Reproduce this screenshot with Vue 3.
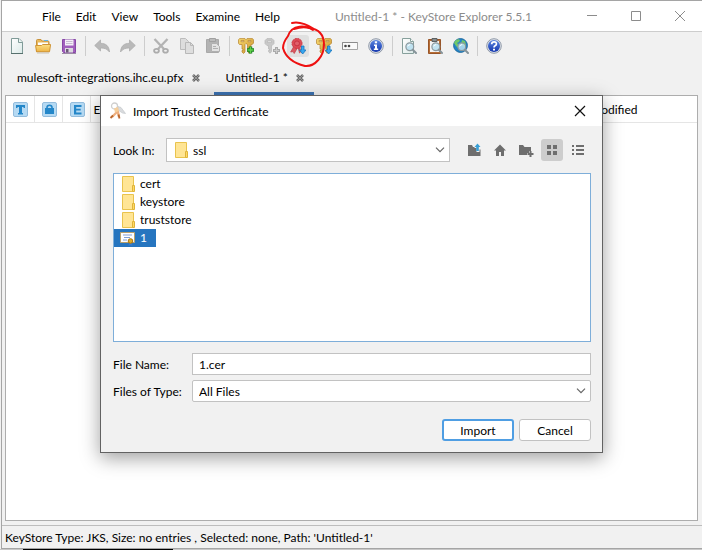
<script setup>
import { ref } from 'vue'

const menus = ['File', 'Edit', 'View', 'Tools', 'Examine', 'Help']
const toolGroups = [
  [{ id: 'new', label: 'New' }, { id: 'open', label: 'Open' }, { id: 'save', label: 'Save' }],
  [{ id: 'undo', label: 'Undo' }, { id: 'redo', label: 'Redo' }],
  [{ id: 'cut', label: 'Cut' }, { id: 'copy', label: 'Copy' }, { id: 'paste', label: 'Paste' }],
  [
    { id: 'genpair', label: 'Generate Key Pair' },
    { id: 'gensecret', label: 'Generate Secret Key' },
    { id: 'importcert', label: 'Import Trusted Certificate' },
    { id: 'importpair', label: 'Import Key Pair' },
    { id: 'password', label: 'Set Password' },
    { id: 'info', label: 'Properties' }
  ],
  [{ id: 'examfile', label: 'Examine File' }, { id: 'examclip', label: 'Examine Clipboard' }, { id: 'examssl', label: 'Examine SSL' }],
  [{ id: 'help', label: 'Help' }]
]
const tabs = [
  { name: 'mulesoft-integrations.ihc.eu.pfx', active: false },
  { name: 'Untitled-1 *', active: true }
]
const files = [
  { name: 'cert', folder: true },
  { name: 'keystore', folder: true },
  { name: 'truststore', folder: true },
  { name: '1', folder: false }
]
const selected = ref('1')
const fileName = ref('1.cer')
</script>

<template>
  <div class="screen">
    <main class="window">
      <header class="titlebar">
        <nav class="menus">
          <button v-for="m in menus" :key="m" type="button">{{ m }}</button>
        </nav>
        <h1>Untitled-1 * - KeyStore Explorer 5.5.1</h1>
        <div class="controls">
          <button type="button" aria-label="Minimize"><svg width="12" height="12" viewBox="0 0 12 12"><path d="M1 5.5h10" /></svg></button>
          <button type="button" aria-label="Maximize"><svg width="12" height="12" viewBox="0 0 12 12"><path d="M1.5 1.5h9v9h-9z" /></svg></button>
          <button type="button" aria-label="Close"><svg width="12" height="12" viewBox="0 0 12 12"><path d="M1 1l10 10M11 1L1 11" /></svg></button>
        </div>
      </header>

      <svg class="defs" width="0" height="0" aria-hidden="true">
        <defs>
          <linearGradient id="page" x1="0" y1="0" x2="1" y2="1"><stop offset="0" stop-color="#fff" /><stop offset="1" stop-color="#dceae8" /></linearGradient>
          <linearGradient id="gold" x1="0" y1="0" x2="1" y2="1"><stop offset="0" stop-color="#f8da72" /><stop offset="1" stop-color="#c9902a" /></linearGradient>
          <linearGradient id="blue" x1="0" y1="0" x2="0" y2="1"><stop offset="0" stop-color="#5b86e0" /><stop offset="1" stop-color="#1437ae" /></linearGradient>
          <linearGradient id="folder" x1="0" y1="0" x2="0" y2="1"><stop offset="0" stop-color="#fbdf84" /><stop offset="1" stop-color="#eeb445" /></linearGradient>
          <g id="lens"><circle cx="8.8" cy="8.8" r="3.9" fill="#b7dff0" fill-opacity=".85" stroke="#8b989d" stroke-width="1.2" /><path d="M6.7 8.4q.6-1.9 2.5-1.8" fill="none" stroke="#fff" /><path d="M11.8 11.8l3.2 3.2" stroke="#87949a" stroke-width="2" stroke-linecap="round" /></g>
          <g id="down"><path d="M11.5 8h2.500v4h2L12.700 16 9.500 12h2z" fill="#37a7f0" stroke="#1774bd" stroke-width=".8" /></g>
          <g id="keys"><path fill-rule="evenodd" d="M1.500.600h5.500l1 1 1-1h5.500l1 1.200v3.500L14 6.500h-1V15h-2.500v-1.500h-1V12h1v-1.500h-1V6.500L8 5.500 7 6.500V14L5.500 15.500 4 14v-1.500h1V11H4V6.500H1.500L.5 5.300V1.800zM3 2.500v1.200h3V2.500zM10 2.500v1.200h3V2.500z" fill="url(#gold)" stroke="#b5832b" stroke-width=".7" /></g>
        </defs>
      </svg>

      <div class="toolbar" role="toolbar" aria-label="Main">
        <template v-for="(group, gi) in toolGroups" :key="gi">
          <span v-if="gi" class="sep"></span>
          <button v-for="t in group" :key="t.id" type="button" :aria-label="t.label" :class="{ hot: t.id === 'importcert' }">
            <svg width="16" height="16" viewBox="0 0 16 16">
              <template v-if="t.id === 'new'">
                <path d="M2.500.500h7.500l3.500 3.500v11.500h-11z" fill="url(#page)" stroke="#809b98" /><path d="M9.500.500v4h4" fill="#edf6f4" stroke="#809b98" /><path d="M2 15.500h12" stroke="#56706d" />
              </template>
              <template v-else-if="t.id === 'open'">
                <path d="M1.500 13.500V2.500q0-1 1-1h3.500l1 1.500h6q1 0 1 1v9z" fill="#e8b95c" stroke="#c8923c" /><path d="M3 4.500h10v4H3z" fill="#fff" /><path d="M9 2.500h4" stroke="#5fb4e8" /><path d="M.6 7.500h6l1-1h8L14.500 13.800H1.500z" fill="url(#folder)" stroke="#cf9436" /><path d="M2 15h12" stroke="#c9c3b8" />
              </template>
              <template v-else-if="t.id === 'save'">
                <path d="M1.500 1.500h13v13h-12l-1-1z" fill="#a160bd" stroke="#8748a6" /><path d="M4 1.500h8.500v6H4z" fill="#f5f0f8" /><path d="M5 3.500h6.500M5 5.500h6.500" stroke="#c9bdd2" /><path d="M4 10h8v4.500H4z" fill="#dcd9df" /><path d="M5 11h2.500v3.500H5z" fill="#6c5a78" /><path d="M1 15.500h14" stroke="#9c8ba5" />
              </template>
              <path v-else-if="t.id === 'undo'" d="M6.500 2v3.300C12 5.300 15 8 15.500 14 13 10.800 10.500 10 6.500 10v3L.7 7.500z" fill="#b9b9b9" stroke="#a9a9a9" stroke-width=".7" />
              <path v-else-if="t.id === 'redo'" d="M9.500 2v3.300C4 5.300 1 8 .500 14 3 10.800 5.500 10 9.500 10v3l5.800-5.500z" fill="#b9b9b9" stroke="#a9a9a9" stroke-width=".7" />
              <template v-else-if="t.id === 'cut'">
                <path d="M1.500 1l9.500 10M14.500 1L5 11" stroke="#b3b3b3" stroke-width="2.300" /><ellipse cx="3.500" cy="12.700" rx="2.400" ry="1.900" fill="none" stroke="#acacac" stroke-width="1.800" /><ellipse cx="12.500" cy="12.700" rx="2.400" ry="1.900" fill="none" stroke="#acacac" stroke-width="1.800" />
              </template>
              <template v-else-if="t.id === 'copy'">
                <path d="M1.500.500h5l3 3v8h-8z" fill="#ddd" stroke="#bcbcbc" /><path d="M6.500 4.500h5l3 3v8h-8z" fill="#dedede" stroke="#b8b8b8" /><path d="M11.500 4.500v3h3" fill="none" stroke="#b8b8b8" />
              </template>
              <template v-else-if="t.id === 'paste'">
                <path d="M1.500 1.500h12v13h-12z" fill="#b3b3b3" stroke="#a9a9a9" /><path d="M4.500.500h6v3h-6z" fill="#bbb" stroke="#a0a0a0" /><path d="M6.500 5.500h5l3 3v5h-8z" fill="#e2e2e2" stroke="#b0b0b0" /><path d="M8 8.500h3M8 10.500h5" stroke="#b0b0b0" />
              </template>
              <template v-else-if="t.id === 'genpair'">
                <use href="#keys" /><path d="M12.500 8.500v7M9 12h7" stroke="#17801e" stroke-width="3.400" /><path d="M12.500 9v6M9.500 12h6" stroke="#62d14c" stroke-width="1.600" />
              </template>
              <template v-else-if="t.id === 'gensecret'">
                <path fill-rule="evenodd" d="M3 .600h5l2 2v3l-2 2H7.500v6L6 15.200 4.500 13.500v-1h1V11h-1V7.600H3l-2-2v-3zM3.500 3v1.500h4V3z" fill="#c8c8c8" stroke="#b6b6b6" stroke-width=".7" /><path d="M12.500 9v7M9 12.500h7" stroke="#aaa" stroke-width="3" /><path d="M12.500 10v5M10 12.500h5" stroke="#ccc" />
              </template>
              <template v-else-if="t.id === 'importcert'">
                <path d="M4 8L.700 14l2.500-.4 1 1.900L8 9l1.500 6 1.200-1-1-6z" fill="#dc5860" stroke="#c03a45" stroke-width=".7" /><circle cx="7" cy="5.400" r="5" fill="#dd4c56" stroke="#cc3542" stroke-dasharray="1.900 .7" /><circle cx="7" cy="5.400" r="2.500" fill="#e0606a" stroke="#c83241" /><use href="#down" />
              </template>
              <template v-else-if="t.id === 'importpair'"><use href="#keys" /><use href="#down" /></template>
              <template v-else-if="t.id === 'password'">
                <path d="M.500 4.500h15v7H.500z" fill="#fafafa" stroke="#a6a6a6" /><path d="M.500 11.500v-7h15" fill="none" stroke="#8c8c8c" /><circle cx="3.500" cy="8" r="1.300" fill="#444" /><circle cx="7" cy="8" r="1.300" fill="#444" />
              </template>
              <template v-else-if="t.id === 'info'">
                <circle cx="8" cy="8" r="7.300" fill="#dfe3ea" stroke="#909aa9" /><circle cx="8" cy="8" r="6" fill="url(#blue)" /><path d="M6 6.500h3v4h1.200V12H5.800v-1.500H7V8H6z" fill="#fff" /><path d="M6.800 3.300h2.300v2H6.800z" fill="#fff" />
              </template>
              <template v-else-if="t.id === 'examfile'">
                <path d="M1.500.500h8l3 3v12h-11z" fill="url(#page)" stroke="#87a09c" /><path d="M9.500.500v3h3" fill="#fff" stroke="#87a09c" /><use href="#lens" />
              </template>
              <template v-else-if="t.id === 'examclip'">
                <path d="M1.500 1.500h12v14h-12z" fill="#b86e35" stroke="#985528" /><path d="M3 3h9v11H3z" fill="#f5f5f5" /><path d="M5 .500h5v3H5z" fill="#888f91" stroke="#5d6162" /><use href="#lens" />
              </template>
              <template v-else-if="t.id === 'examssl'">
                <circle cx="7.500" cy="7.500" r="6.900" fill="#2184c8" stroke="#246c9e" /><path d="M2 3q3-3 5-1l-1 2-2 1 2 2-1 3-2-2-2-3zM9 2l3 1 1 4-2 2-3-3z" fill="#71c96a" /><use href="#lens" />
              </template>
              <template v-else>
                <circle cx="8" cy="8" r="7.300" fill="#dfe3ea" stroke="#909aa9" /><circle cx="8" cy="8" r="6" fill="url(#blue)" /><path d="M5.700 6.200q0-2.300 2.400-2.300t2.300 2q0 1.200-1.300 1.800Q8 8.300 8 9.500" fill="none" stroke="#fff" stroke-width="1.700" /><path d="M7 10.700h2v1.800H7z" fill="#fff" />
              </template>
            </svg>
          </button>
        </template>
      </div>

      <div class="tabs">
        <div v-for="t in tabs" :key="t.name" class="tab" :class="{ active: t.active }">
          <button type="button" class="name">{{ t.name }}</button>
          <button type="button" class="close" :aria-label="'Close ' + t.name">
            <svg width="8" height="8" viewBox="0 0 8 8"><path d="M1 1l6 6M7 1L1 7" fill="none" stroke="#686868" stroke-width="2.600" /><path d="M1 1l6 6M7 1L1 7" fill="none" stroke="#a5a5a5" stroke-width=".8" /></svg>
          </button>
        </div>
      </div>

      <section class="content">
        <table>
          <colgroup><col class="c-icon" /><col class="c-icon" /><col class="c-icon" /><col /><col class="c-date" /></colgroup>
          <thead>
            <tr>
              <th aria-label="Type"><svg width="16" height="16" viewBox="0 0 16 16"><rect x=".5" y=".5" width="14" height="14" rx="1.500" fill="#b6daf3" stroke="#94bddd" /><path d="M3 3h9v3h-1.500V5H9v6h1v1.500H5V11h1V5H4.500v1H3z" fill="#2487c9" /></svg></th>
              <th aria-label="Lock status"><svg width="16" height="16" viewBox="0 0 16 16"><rect x=".5" y=".5" width="14" height="14" rx="1.500" fill="#b6daf3" stroke="#94bddd" /><path d="M5 7V5.500q0-2.300 2.500-2.300T10 5.500V7" fill="none" stroke="#2487c9" stroke-width="1.600" /><path d="M3 6h9v6H3z" fill="#2487c9" /></svg></th>
              <th aria-label="Expiry status"><svg width="16" height="16" viewBox="0 0 16 16"><rect x=".5" y=".5" width="14" height="14" rx="1.500" fill="#b6daf3" stroke="#94bddd" /><path d="M4 3h7.500v2H6.200v1.700h4.500v1.800H6.200v2h5.300v2H4z" fill="#2487c9" /></svg></th>
              <th>Entry</th>
              <th>Last Modified</th>
            </tr>
          </thead>
        </table>
      </section>
      <footer class="status">KeyStore Type: JKS, Size: no entries , Selected: none, Path: 'Untitled-1'</footer>
    </main>
    <div class="behind"><span></span></div>

    <svg class="marker" width="46" height="50" viewBox="0 0 46 50" aria-hidden="true">
      <path d="M10 3C18 1 28 6 32 9M31 10C24 5 10 4 6 16 3 20 1 25 1 28C4 39 15 44 23 46C33 47 42 36 42 25C42 16 38 9 27 8C21 6 15 8 12 9" />
    </svg>

    <form class="dialog" role="dialog" aria-labelledby="dialog-title" @submit.prevent>
      <div class="dialog-title">
        <svg width="18" height="18" viewBox="0 0 18 18"><circle cx="5.500" cy="4" r="3" fill="none" stroke="#cfcfcf" stroke-width="1.300" /><path d="M7 6l1 4-5 5M8.500 8l1.500 7" fill="none" stroke="#eeb080" stroke-width="2.400" /><path d="M4 13.500L1.500 16M9.500 12.500l1 4" stroke="#ba672d" stroke-width="1.800" /><path d="M9 4.500l3 1 4.500 6-3-.500L9 8z" fill="#d9dbde" stroke="#c4c8cb" stroke-width=".7" /><path d="M5 6.500l4-1.500 1 4-4 1.500z" fill="#f5cf9c" /></svg>
        <h2 id="dialog-title">Import Trusted Certificate</h2>
        <button type="button" aria-label="Close dialog"><svg width="12" height="12" viewBox="0 0 12 12"><path d="M1 1l10 10M11 1L1 11" /></svg></button>
      </div>
      <div class="dialog-body">
        <div class="look">
          <label for="look-in">Look In:</label>
          <div class="combo">
            <select id="look-in"><option>ssl</option></select>
            <svg class="lead" width="14" height="16" viewBox="0 0 14 16"><path d="M.500.500h11v15H.500z" fill="#ffe595" stroke="#e9c34d" /><path d="M10.500 9.500h2v6h-2z" fill="#ffd965" stroke="#dfb43a" /></svg>
            <svg class="chev" width="10" height="6" viewBox="0 0 10 6"><path d="M1 .700l4 4 4-4" /></svg>
          </div>
          <div class="nav">
            <button type="button" aria-label="Up one level"><svg width="14" height="14" viewBox="0 0 14 14"><path d="M1 2h4l1 2h7v9H1z" fill="#6e6e6e" /><path d="M7.500 0h6v9h-4V5h-2z" fill="#f1f1f1" /><path d="M9.200 8V4H7.500L10.500.5l3 3.500h-1.700v4z" fill="#389fd6" /><path d="M12.500 6.500h1V13H7V9.500h5.500z" fill="#6e6e6e" /></svg></button>
            <button type="button" aria-label="Home"><svg width="14" height="14" viewBox="0 0 14 14"><path d="M7 1.500l6 6h-2V13H8V9H6v4H3V7.500H1z" fill="#6e6e6e" /></svg></button>
            <button type="button" aria-label="New folder"><svg width="16" height="14" viewBox="0 0 16 14"><path d="M1 2h4l1.500 2H13v4h-2v2H9v2H1z" fill="#6e6e6e" /><path d="M12.500 8v6M9.500 11h6" stroke="#6e6e6e" stroke-width="2" /></svg></button>
            <button type="button" aria-label="List view" class="on"><svg width="12" height="12" viewBox="0 0 12 12"><path d="M1 1h4v4H1zM7 1h4v4H7zM1 7h4v4H1zM7 7h4v4H7z" fill="#6e6e6e" /></svg></button>
            <button type="button" aria-label="Details view"><svg width="12" height="12" viewBox="0 0 12 12"><path d="M0 1h2v2H0zM4 1h8v2H4zM0 5h2v2H0zM4 5h8v2H4zM0 9h2v2H0zM4 9h8v2H4z" fill="#6e6e6e" /></svg></button>
          </div>
        </div>
        <ul class="files" role="listbox" aria-label="Files">
          <li v-for="f in files" :key="f.name" role="option" :aria-selected="f.name === selected" :class="{ sel: f.name === selected }" @click="selected = f.name">
            <svg v-if="f.folder" width="16" height="16" viewBox="0 0 16 16"><path d="M2.500.500h11v15h-11z" fill="#ffe595" stroke="#e9c34d" /><path d="M12.500 9.500h2v6h-2z" fill="#ffd965" stroke="#dfb43a" /></svg>
            <svg v-else width="16" height="16" viewBox="0 0 16 16"><path d="M.500 2.500h14v10H.500z" fill="#fff" stroke="#b9a06c" /><path d="M3 5h9M4 7.500h6M3 10h4" stroke="#829fd7" /><path d="M9 12l-.5 4 2-.8 2 .8L12 12z" fill="#397bd0" /><circle cx="10.500" cy="11" r="2.300" fill="#e3ae26" stroke="#a87411" /></svg>
            <span>{{ f.name }}</span>
          </li>
        </ul>
        <div class="fields">
          <label for="file-name">File Name:</label>
          <input id="file-name" v-model="fileName" type="text" />
          <label for="file-type">Files of Type:</label>
          <div class="combo">
            <select id="file-type"><option>All Files</option></select>
            <svg class="chev" width="10" height="6" viewBox="0 0 10 6"><path d="M1 .700l4 4 4-4" /></svg>
          </div>
        </div>
        <div class="actions">
          <button type="submit" class="primary">Import</button>
          <button type="button">Cancel</button>
        </div>
      </div>
    </form>
  </div>
</template>

<style>
body { margin: 0; background: #f1f1f1; }
</style>

<style scoped>
.screen { position: relative; display: flex; flex-direction: column; min-height: 100vh; overflow: hidden; font: 12px/16px Lato, "Open Sans", sans-serif; color: #000; box-sizing: border-box; }
.screen *, .screen *::before { box-sizing: border-box; }
button { font: inherit; color: inherit; border: 0; background: none; padding: 0; display: flex; align-items: center; justify-content: center; }
h1, h2 { margin: 0; font: inherit; }
svg { display: block; flex: none; }
.defs { position: absolute; }
.window { flex: 1; display: flex; flex-direction: column; margin-left: 1px; background: #f1f1f1; border: solid #a5a5a5; border-width: 1px 0 1px 1px; }
.titlebar { display: flex; align-items: center; height: 31px; background: #fff; border-bottom: 1px solid #cdcdcd; padding-left: 40px; }
.menus { display: flex; gap: 15px; padding-top: 2px; }
.titlebar h1 { flex: 1; color: #8c8c8c; white-space: nowrap; margin-left: 55px; padding-top: 2px; }
.controls { display: flex; }
.controls button { width: 44px; height: 30px; }
.controls path { fill: none; stroke: #8c8c8c; }
.toolbar { display: flex; align-items: center; gap: 4px; height: 28px; padding-left: 4px; }
.toolbar button { width: 22px; height: 22px; border-radius: 3px; }
.toolbar .hot { background: #e0e0e0; }
.sep { width: 3px; height: 20px; background: linear-gradient(#cdcdcd, #cdcdcd) center / 1px 100% no-repeat; }
.tabs { display: flex; gap: 4px; height: 35px; padding-left: 3px; }
.tab { display: flex; align-items: center; gap: 8px; padding: 4px 10px 0 12px; border-bottom: 3px solid transparent; white-space: nowrap; }
.tab.active { border-bottom-color: #3d74b4; }
.content { flex: 1; margin: 0 4px 4px 3px; background: #fff; border: 1px solid #adadad; }
table { width: 100%; table-layout: fixed; border-collapse: collapse; }
.c-icon { width: 28px; }
.c-date { width: 135px; }
th { height: 26px; padding: 3px 3px 0; font-weight: 400; text-align: left; border-right: 1px solid #e5e5e5; border-bottom: 1px solid #e5e5e5; }
th svg { margin-left: 4px; }
th:last-child { border-right: 0; }
.status { height: 23px; padding: 4px 3px 0; border-top: 1px solid #bdbdbd; white-space: nowrap; }
.behind { height: 1px; background: #c8c8c8; padding-left: 23px; }
.behind span { display: block; width: 150px; height: 1px; background: #000; }
.marker { position: absolute; left: 282px; top: 20px; }
.marker path { fill: none; stroke: #ee1111; stroke-width: 2; stroke-linecap: round; stroke-linejoin: round; }

.dialog { position: absolute; top: 95px; left: 100px; right: 99px; background: #f1f1f1; border: 1px solid #626262; box-shadow: 0 5px 18px rgba(0, 0, 0, .38); }
.dialog-title { display: flex; align-items: center; height: 30px; background: #fff; padding-left: 8px; }
.dialog-title h2 { flex: 1; margin-left: 6px; padding-top: 2px; }
.dialog-title button { width: 44px; height: 30px; }
.dialog-title button path { fill: none; stroke: #111; stroke-width: 1.2; }
.dialog-body { padding: 12px 11px 11px 12px; display: flex; flex-direction: column; }
.look { display: flex; align-items: center; height: 24px; }
.look label { width: 53px; white-space: nowrap; }
.look .combo { flex: 1; }
.nav { display: flex; gap: 4px; margin-left: 13px; margin-right: 2px; }
.nav button { width: 22px; height: 22px; border-radius: 3px; }
.nav .on { background: #cdcdcd; }
.combo { display: grid; align-items: center; }
.combo > * { grid-area: 1 / 1; }
select, input { appearance: none; width: 100%; height: 22px; margin: 0; padding: 1px 6px 0; border: 1px solid #c2c2c2; border-radius: 2px; background: #fff; color: #000; font: inherit; outline: 0; }
.look select { height: 24px; padding-left: 26px; border-radius: 0; }
input { border-radius: 0; }
label { padding-top: 1px; }
.lead { margin-left: 9px; pointer-events: none; }
.chev { justify-self: end; margin-right: 5px; pointer-events: none; }
.chev path { fill: none; stroke: #666; stroke-width: 1.2; }
.files { list-style: none; margin: 11px 0; padding: 1px 0 0; height: 169px; background: #fff; border: 1px solid #7eaed9; display: flex; flex-direction: column; align-items: flex-start; }
.files li { display: flex; align-items: center; gap: 4px; height: 18px; padding: 0 9px 0 6px; }
.files .sel { background: #2675bf; color: #fff; }
.fields { display: grid; grid-template-columns: 79px 1fr; row-gap: 5px; align-items: center; }
.fields label { white-space: nowrap; }
.actions { display: flex; justify-content: flex-end; gap: 5px; margin-top: 17px; }
.actions button { width: 72px; height: 22px; padding-top: 1px; background: #fff; border: 1px solid #c2c2c2; border-radius: 3px; }
.actions .primary { border: 2px solid #4f9ee3; }
</style>
